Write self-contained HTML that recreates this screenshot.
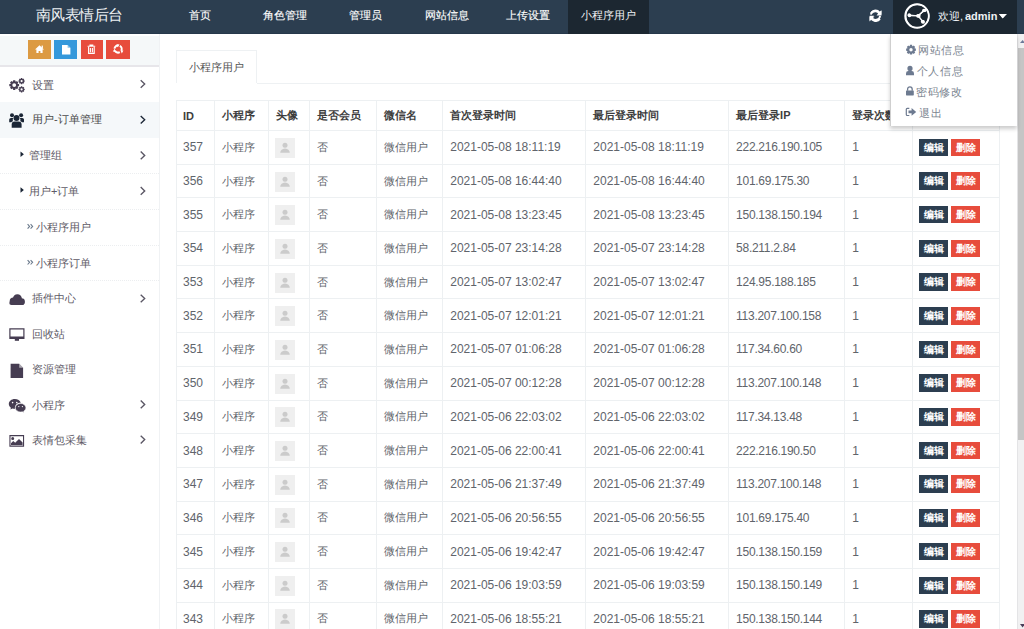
<!DOCTYPE html><html><head><meta charset="utf-8"><style>
*{margin:0;padding:0;box-sizing:border-box}
html,body{width:1024px;height:629px;overflow:hidden;background:#fff;font-family:"Liberation Sans",sans-serif}
.abs{position:absolute}
#hdr{position:absolute;left:0;top:0;width:1024px;height:34px;background:#2c3e50;border-bottom:1px solid #26384b}
.logo{position:absolute;left:36px;top:6px;font-size:15px;letter-spacing:-0.55px;color:#eef2f4;line-height:18px;white-space:nowrap}
.nav{position:absolute;top:0;height:34px;line-height:31px;font-size:11px;color:#f2f4f6;text-align:center;white-space:nowrap}
.nav.b{-webkit-text-stroke:0.12px #fff;color:#fff}
.nav.act{background:#1c2731}
#user{position:absolute;left:893px;top:0;width:124px;height:34px;background:#1c2731}
#side{position:absolute;left:0;top:34px;width:160px;height:595px;background:#fff;border-right:1px solid #f0f2f4}
#tool{position:absolute;left:0;top:2px;width:159px;height:31px;background:#f5f8f9;border-bottom:2px solid #e7e6ea}
.tb{position:absolute;top:4px;height:19px}
.mi{position:absolute;left:0;width:159px;height:36px;font-size:11px;color:#5e5a66;}
.mi .t{position:absolute;top:0;line-height:34px;white-space:nowrap}
.mi .chev{position:absolute;left:139px;top:14px}
.mi .ic{position:absolute;left:9px}
#content{position:absolute;left:160px;top:35px;width:857px;height:594px;background:#fff;overflow:hidden}
#sb{position:absolute;left:1017px;top:34px;width:7px;height:595px;background:#f1f1f2;border-left:1px solid #e4e4e6}
#thumb{position:absolute;left:0;top:14px;width:6px;height:392px;background:#c5c5c5}
.tab{position:absolute;left:16px;top:15px;width:81px;height:33px;border:1px solid #eef1f3;border-bottom:none;background:#fff;font-size:11px;color:#555;line-height:32px;text-align:center}
.tabline{position:absolute;left:97px;top:48px;width:760px;height:1px;background:#eef1f3}
table{position:absolute;left:16px;top:65px;border-collapse:collapse;table-layout:fixed;width:824px}
td,th{border:1px solid #edf0f2;padding:0 0 0 7px;font-size:13px;color:#60646b;text-align:left;white-space:nowrap;overflow:hidden;font-weight:normal;vertical-align:middle}
th:first-child{padding-left:6px}
th{font-weight:bold;color:#3d3d3d;font-size:11px;height:30px}
td{height:33.7px;font-size:12px}
td.cj{font-size:11px}
.av{display:block;margin:1px 0 0 -0.7px}
.btn{display:inline-block;width:29px;height:17.5px;line-height:17.5px;font-size:10px;font-weight:bold;color:#fff;text-align:center;vertical-align:middle}
.be{background:#2c3e50}
.bd{background:#e74c3c;margin-left:3px}
#dd{position:absolute;left:889.5px;top:34px;width:127.5px;height:92px;background:#fff;box-shadow:0 3px 4px rgba(0,0,0,.2);border-left:1px solid #cfcfcf}
.di{position:absolute;font-size:11px;color:#7b8590;white-space:nowrap;line-height:14px;letter-spacing:0.7px}
</style></head><body>
<div id="hdr"><div class="logo">南风表情后台</div>
<div class="nav b" style="left:159px;width:81px">首页</div>
<div class="nav b" style="left:244px;width:81px">角色管理</div>
<div class="nav b" style="left:325px;width:81px">管理员</div>
<div class="nav b" style="left:406px;width:81px">网站信息</div>
<div class="nav b" style="left:487px;width:81px">上传设置</div>
<div class="nav act" style="left:568px;width:81px">小程序用户</div>
<svg class="abs" style="left:869px;top:10px" width="13" height="12" viewBox="0 0 13 12"><path d="M11 4.5A5 5 0 0 0 2.2 3.2" stroke="#fff" stroke-width="2.2" fill="none"/><path d="M12.5 0.5V5.5H7.5z" fill="#fff"/><path d="M2 7.5A5 5 0 0 0 10.8 8.8" stroke="#fff" stroke-width="2.2" fill="none"/><path d="M0.5 11.5V6.5H5.5z" fill="#fff"/></svg>
<div id="user">
<svg class="abs" style="left:11px;top:3px" width="26" height="26" viewBox="0 0 26 26"><circle cx="13" cy="13" r="11.8" stroke="#fff" stroke-width="1.8" fill="none"/><path d="M5.5 12.5L14 12.8L19.8 7.5M14 12.8L18.6 18.4" stroke="#fff" stroke-width="1.3" fill="none"/><circle cx="5.5" cy="12.5" r="1.7" fill="#fff"/><circle cx="14" cy="12.8" r="1.9" fill="#fff"/><circle cx="19.8" cy="7.5" r="1.7" fill="#fff"/><circle cx="18.6" cy="18.4" r="1.7" fill="#fff"/></svg>
<div class="abs" style="left:45px;top:9px;font-size:11px;color:#eef2f4;white-space:nowrap;line-height:14px">欢迎,</div><div class="abs" style="left:72px;top:9px;font-size:11px;font-weight:bold;color:#eef2f4;white-space:nowrap;line-height:14px">admin</div>
<svg class="abs" style="left:106px;top:14px" width="8" height="4" viewBox="0 0 8 4"><path d="M0 0H8L4 4z" fill="#fff"/></svg>
</div></div>
<div id="side"><div id="tool">
<div class="tb" style="left:28px;width:23px;background:#dc9a42"></div>
<div class="tb" style="left:54px;width:23px;background:#3498db"></div>
<div class="tb" style="left:81px;width:22px;background:#e74c3c"></div>
<div class="tb" style="left:106px;width:24px;background:#e74c3c"></div>
</div>
<div class="mi" style="top:33px;"><span class="t" style="left:32px;top:0.9px">设置</span>
</div>
<div class="mi" style="top:67.5px;background:#f5f8fa;color:#4a4a4a;"><span class="t" style="left:32px;top:0.9px">用户-订单管理</span>
</div>
<div class="mi" style="top:103.5px;"><span class="t" style="left:29px;top:0.9px">管理组</span>
</div>
<div class="mi" style="top:139px;"><span class="t" style="left:29px;top:0.9px">用户+订单</span>
</div>
<div class="mi" style="top:174.5px;"><span class="t" style="left:36px;top:1.6px">小程序用户</span>
</div>
<div class="mi" style="top:210.5px;"><span class="t" style="left:36px;top:1.6px">小程序订单</span>
</div>
<div class="mi" style="top:246.5px;"><span class="t" style="left:32px;top:0.9px">插件中心</span>
</div>
<div class="mi" style="top:282px;"><span class="t" style="left:32px;top:0.9px">回收站</span>
</div>
<div class="mi" style="top:317.5px;"><span class="t" style="left:32px;top:0.9px">资源管理</span>
</div>
<div class="mi" style="top:353px;"><span class="t" style="left:32px;top:0.9px">小程序</span>
</div>
<div class="mi" style="top:388px;"><span class="t" style="left:32px;top:0.9px">表情包采集</span>
</div>
<div class="abs" style="left:0;top:138.5px;width:159px;height:0;border-top:1px dotted #eceef0"></div>
<div class="abs" style="left:0;top:174.5px;width:159px;height:0;border-top:1px dotted #eceef0"></div>
<div class="abs" style="left:0;top:210.5px;width:159px;height:0;border-top:1px dotted #eceef0"></div>
<div class="abs" style="left:0;top:246px;width:159px;height:0;border-top:1px dotted #eceef0"></div>
</div>
<div id="content">
<div class="tab">小程序用户</div><div class="tabline"></div>
<table><colgroup><col style="width:38.25px"><col style="width:53.9px"><col style="width:41.0px"><col style="width:66.4px"><col style="width:66.7px"><col style="width:143.1px"><col style="width:142.8px"><col style="width:116.2px"><col style="width:67.8px"><col style="width:87.0px"></colgroup>
<tr><th>ID</th><th>小程序</th><th>头像</th><th>是否会员</th><th>微信名</th><th>首次登录时间</th><th>最后登录时间</th><th>最后登录IP</th><th>登录次数</th><th></th></tr>
<tr><td style="padding-left:6px">357</td><td class="cj">小程序</td><td><svg class="av" width="20" height="20"><rect x="0" y="0" width="20" height="20" fill="#efefef"/><path d="M7.50 7.30a2.5 2.5 0 1 0 5.00 0a2.5 2.5 0 1 0 -5.00 0Z" fill="#cbcbcb"/><path d="M5.2 14.8Q5.6 10.8 10 10.4Q14.4 10.8 14.8 14.8z" fill="#cbcbcb"/></svg></td><td class="cj">否</td><td class="cj">微信用户</td><td>2021-05-08 18:11:19</td><td>2021-05-08 18:11:19</td><td style="letter-spacing:-0.28px">222.216.190.105</td><td>1</td><td style="padding-left:6px"><span class="btn be">编辑</span><span class="btn bd">删除</span></td></tr>
<tr><td style="padding-left:6px">356</td><td class="cj">小程序</td><td><svg class="av" width="20" height="20"><rect x="0" y="0" width="20" height="20" fill="#efefef"/><path d="M7.50 7.30a2.5 2.5 0 1 0 5.00 0a2.5 2.5 0 1 0 -5.00 0Z" fill="#cbcbcb"/><path d="M5.2 14.8Q5.6 10.8 10 10.4Q14.4 10.8 14.8 14.8z" fill="#cbcbcb"/></svg></td><td class="cj">否</td><td class="cj">微信用户</td><td>2021-05-08 16:44:40</td><td>2021-05-08 16:44:40</td><td style="letter-spacing:-0.28px">101.69.175.30</td><td>1</td><td style="padding-left:6px"><span class="btn be">编辑</span><span class="btn bd">删除</span></td></tr>
<tr><td style="padding-left:6px">355</td><td class="cj">小程序</td><td><svg class="av" width="20" height="20"><rect x="0" y="0" width="20" height="20" fill="#efefef"/><path d="M7.50 7.30a2.5 2.5 0 1 0 5.00 0a2.5 2.5 0 1 0 -5.00 0Z" fill="#cbcbcb"/><path d="M5.2 14.8Q5.6 10.8 10 10.4Q14.4 10.8 14.8 14.8z" fill="#cbcbcb"/></svg></td><td class="cj">否</td><td class="cj">微信用户</td><td>2021-05-08 13:23:45</td><td>2021-05-08 13:23:45</td><td style="letter-spacing:-0.28px">150.138.150.194</td><td>1</td><td style="padding-left:6px"><span class="btn be">编辑</span><span class="btn bd">删除</span></td></tr>
<tr><td style="padding-left:6px">354</td><td class="cj">小程序</td><td><svg class="av" width="20" height="20"><rect x="0" y="0" width="20" height="20" fill="#efefef"/><path d="M7.50 7.30a2.5 2.5 0 1 0 5.00 0a2.5 2.5 0 1 0 -5.00 0Z" fill="#cbcbcb"/><path d="M5.2 14.8Q5.6 10.8 10 10.4Q14.4 10.8 14.8 14.8z" fill="#cbcbcb"/></svg></td><td class="cj">否</td><td class="cj">微信用户</td><td>2021-05-07 23:14:28</td><td>2021-05-07 23:14:28</td><td style="letter-spacing:-0.28px">58.211.2.84</td><td>1</td><td style="padding-left:6px"><span class="btn be">编辑</span><span class="btn bd">删除</span></td></tr>
<tr><td style="padding-left:6px">353</td><td class="cj">小程序</td><td><svg class="av" width="20" height="20"><rect x="0" y="0" width="20" height="20" fill="#efefef"/><path d="M7.50 7.30a2.5 2.5 0 1 0 5.00 0a2.5 2.5 0 1 0 -5.00 0Z" fill="#cbcbcb"/><path d="M5.2 14.8Q5.6 10.8 10 10.4Q14.4 10.8 14.8 14.8z" fill="#cbcbcb"/></svg></td><td class="cj">否</td><td class="cj">微信用户</td><td>2021-05-07 13:02:47</td><td>2021-05-07 13:02:47</td><td style="letter-spacing:-0.28px">124.95.188.185</td><td>1</td><td style="padding-left:6px"><span class="btn be">编辑</span><span class="btn bd">删除</span></td></tr>
<tr><td style="padding-left:6px">352</td><td class="cj">小程序</td><td><svg class="av" width="20" height="20"><rect x="0" y="0" width="20" height="20" fill="#efefef"/><path d="M7.50 7.30a2.5 2.5 0 1 0 5.00 0a2.5 2.5 0 1 0 -5.00 0Z" fill="#cbcbcb"/><path d="M5.2 14.8Q5.6 10.8 10 10.4Q14.4 10.8 14.8 14.8z" fill="#cbcbcb"/></svg></td><td class="cj">否</td><td class="cj">微信用户</td><td>2021-05-07 12:01:21</td><td>2021-05-07 12:01:21</td><td style="letter-spacing:-0.28px">113.207.100.158</td><td>1</td><td style="padding-left:6px"><span class="btn be">编辑</span><span class="btn bd">删除</span></td></tr>
<tr><td style="padding-left:6px">351</td><td class="cj">小程序</td><td><svg class="av" width="20" height="20"><rect x="0" y="0" width="20" height="20" fill="#efefef"/><path d="M7.50 7.30a2.5 2.5 0 1 0 5.00 0a2.5 2.5 0 1 0 -5.00 0Z" fill="#cbcbcb"/><path d="M5.2 14.8Q5.6 10.8 10 10.4Q14.4 10.8 14.8 14.8z" fill="#cbcbcb"/></svg></td><td class="cj">否</td><td class="cj">微信用户</td><td>2021-05-07 01:06:28</td><td>2021-05-07 01:06:28</td><td style="letter-spacing:-0.28px">117.34.60.60</td><td>1</td><td style="padding-left:6px"><span class="btn be">编辑</span><span class="btn bd">删除</span></td></tr>
<tr><td style="padding-left:6px">350</td><td class="cj">小程序</td><td><svg class="av" width="20" height="20"><rect x="0" y="0" width="20" height="20" fill="#efefef"/><path d="M7.50 7.30a2.5 2.5 0 1 0 5.00 0a2.5 2.5 0 1 0 -5.00 0Z" fill="#cbcbcb"/><path d="M5.2 14.8Q5.6 10.8 10 10.4Q14.4 10.8 14.8 14.8z" fill="#cbcbcb"/></svg></td><td class="cj">否</td><td class="cj">微信用户</td><td>2021-05-07 00:12:28</td><td>2021-05-07 00:12:28</td><td style="letter-spacing:-0.28px">113.207.100.148</td><td>1</td><td style="padding-left:6px"><span class="btn be">编辑</span><span class="btn bd">删除</span></td></tr>
<tr><td style="padding-left:6px">349</td><td class="cj">小程序</td><td><svg class="av" width="20" height="20"><rect x="0" y="0" width="20" height="20" fill="#efefef"/><path d="M7.50 7.30a2.5 2.5 0 1 0 5.00 0a2.5 2.5 0 1 0 -5.00 0Z" fill="#cbcbcb"/><path d="M5.2 14.8Q5.6 10.8 10 10.4Q14.4 10.8 14.8 14.8z" fill="#cbcbcb"/></svg></td><td class="cj">否</td><td class="cj">微信用户</td><td>2021-05-06 22:03:02</td><td>2021-05-06 22:03:02</td><td style="letter-spacing:-0.28px">117.34.13.48</td><td>1</td><td style="padding-left:6px"><span class="btn be">编辑</span><span class="btn bd">删除</span></td></tr>
<tr><td style="padding-left:6px">348</td><td class="cj">小程序</td><td><svg class="av" width="20" height="20"><rect x="0" y="0" width="20" height="20" fill="#efefef"/><path d="M7.50 7.30a2.5 2.5 0 1 0 5.00 0a2.5 2.5 0 1 0 -5.00 0Z" fill="#cbcbcb"/><path d="M5.2 14.8Q5.6 10.8 10 10.4Q14.4 10.8 14.8 14.8z" fill="#cbcbcb"/></svg></td><td class="cj">否</td><td class="cj">微信用户</td><td>2021-05-06 22:00:41</td><td>2021-05-06 22:00:41</td><td style="letter-spacing:-0.28px">222.216.190.50</td><td>1</td><td style="padding-left:6px"><span class="btn be">编辑</span><span class="btn bd">删除</span></td></tr>
<tr><td style="padding-left:6px">347</td><td class="cj">小程序</td><td><svg class="av" width="20" height="20"><rect x="0" y="0" width="20" height="20" fill="#efefef"/><path d="M7.50 7.30a2.5 2.5 0 1 0 5.00 0a2.5 2.5 0 1 0 -5.00 0Z" fill="#cbcbcb"/><path d="M5.2 14.8Q5.6 10.8 10 10.4Q14.4 10.8 14.8 14.8z" fill="#cbcbcb"/></svg></td><td class="cj">否</td><td class="cj">微信用户</td><td>2021-05-06 21:37:49</td><td>2021-05-06 21:37:49</td><td style="letter-spacing:-0.28px">113.207.100.148</td><td>1</td><td style="padding-left:6px"><span class="btn be">编辑</span><span class="btn bd">删除</span></td></tr>
<tr><td style="padding-left:6px">346</td><td class="cj">小程序</td><td><svg class="av" width="20" height="20"><rect x="0" y="0" width="20" height="20" fill="#efefef"/><path d="M7.50 7.30a2.5 2.5 0 1 0 5.00 0a2.5 2.5 0 1 0 -5.00 0Z" fill="#cbcbcb"/><path d="M5.2 14.8Q5.6 10.8 10 10.4Q14.4 10.8 14.8 14.8z" fill="#cbcbcb"/></svg></td><td class="cj">否</td><td class="cj">微信用户</td><td>2021-05-06 20:56:55</td><td>2021-05-06 20:56:55</td><td style="letter-spacing:-0.28px">101.69.175.40</td><td>1</td><td style="padding-left:6px"><span class="btn be">编辑</span><span class="btn bd">删除</span></td></tr>
<tr><td style="padding-left:6px">345</td><td class="cj">小程序</td><td><svg class="av" width="20" height="20"><rect x="0" y="0" width="20" height="20" fill="#efefef"/><path d="M7.50 7.30a2.5 2.5 0 1 0 5.00 0a2.5 2.5 0 1 0 -5.00 0Z" fill="#cbcbcb"/><path d="M5.2 14.8Q5.6 10.8 10 10.4Q14.4 10.8 14.8 14.8z" fill="#cbcbcb"/></svg></td><td class="cj">否</td><td class="cj">微信用户</td><td>2021-05-06 19:42:47</td><td>2021-05-06 19:42:47</td><td style="letter-spacing:-0.28px">150.138.150.159</td><td>1</td><td style="padding-left:6px"><span class="btn be">编辑</span><span class="btn bd">删除</span></td></tr>
<tr><td style="padding-left:6px">344</td><td class="cj">小程序</td><td><svg class="av" width="20" height="20"><rect x="0" y="0" width="20" height="20" fill="#efefef"/><path d="M7.50 7.30a2.5 2.5 0 1 0 5.00 0a2.5 2.5 0 1 0 -5.00 0Z" fill="#cbcbcb"/><path d="M5.2 14.8Q5.6 10.8 10 10.4Q14.4 10.8 14.8 14.8z" fill="#cbcbcb"/></svg></td><td class="cj">否</td><td class="cj">微信用户</td><td>2021-05-06 19:03:59</td><td>2021-05-06 19:03:59</td><td style="letter-spacing:-0.28px">150.138.150.149</td><td>1</td><td style="padding-left:6px"><span class="btn be">编辑</span><span class="btn bd">删除</span></td></tr>
<tr><td style="padding-left:6px">343</td><td class="cj">小程序</td><td><svg class="av" width="20" height="20"><rect x="0" y="0" width="20" height="20" fill="#efefef"/><path d="M7.50 7.30a2.5 2.5 0 1 0 5.00 0a2.5 2.5 0 1 0 -5.00 0Z" fill="#cbcbcb"/><path d="M5.2 14.8Q5.6 10.8 10 10.4Q14.4 10.8 14.8 14.8z" fill="#cbcbcb"/></svg></td><td class="cj">否</td><td class="cj">微信用户</td><td>2021-05-06 18:55:21</td><td>2021-05-06 18:55:21</td><td style="letter-spacing:-0.28px">150.138.150.144</td><td>1</td><td style="padding-left:6px"><span class="btn be">编辑</span><span class="btn bd">删除</span></td></tr>
</table></div>
<div id="sb"><div id="thumb"></div></div>
<div id="dd">
<div class="di" style="left:27.5px;top:9px">网站信息</div>
<div class="di" style="left:26px;top:30px">个人信息</div>
<div class="di" style="left:25.5px;top:50.5px">密码修改</div>
<div class="di" style="left:28.5px;top:71.5px">退出</div>
</div>
<svg style="position:absolute;left:0;top:0;pointer-events:none" width="1024" height="629"><path d="M39.5 45.3L35 49.6H36.4V53.1H38.6V50.9H40.4V53.1H42.6V49.6H44z" fill="#fff"/><rect x="41.6" y="45.6" width="1.3" height="2.4" fill="#fff"/>
<path d="M62 45H67.6L70.4 47.8V54.4H62z" fill="#fff"/><path d="M67.6 45V47.8H70.4z" fill="#3498db" opacity=".6"/>
<path d="M87.6 46.3H95.2M90 46.3V45.1H92.8V46.3M88.6 47V53.4H94.2V47M90.4 48V52.2M92.4 48V52.2" stroke="#fff" stroke-width="1.1" fill="none"/>
<circle cx="118.1" cy="49" r="3.6" stroke="#fff" stroke-width="2" fill="none" stroke-dasharray="5.5 2" transform="rotate(-60 118.1 49)"/><path d="M116.4 44.2L119.6 44.6L117.6 47.2z M123.4 50.6L121.8 53.4L120.6 50.4z M112.8 51.4L114.6 48.8L116 51.8z" fill="#fff"/>
<path fill-rule="evenodd" d="M17.93 83.95 L19.08 84.01 L19.08 86.19 L17.93 86.25 L17.65 86.92 L18.42 87.78 L16.88 89.32 L16.02 88.55 L15.35 88.83 L15.29 89.98 L13.11 89.98 L13.05 88.83 L12.38 88.55 L11.52 89.32 L9.98 87.78 L10.75 86.92 L10.47 86.25 L9.32 86.19 L9.32 84.01 L10.47 83.95 L10.75 83.28 L9.98 82.42 L11.52 80.88 L12.38 81.65 L13.05 81.37 L13.11 80.22 L15.29 80.22 L15.35 81.37 L16.02 81.65 L16.88 80.88 L18.42 82.42 L17.65 83.28ZM12.30 85.10a1.9 1.9 0 1 0 3.80 0a1.9 1.9 0 1 0 -3.80 0ZM23.99 80.36 L24.72 80.40 L24.72 81.80 L23.99 81.84 L23.81 82.27 L24.30 82.81 L23.31 83.80 L22.77 83.31 L22.34 83.49 L22.30 84.22 L20.90 84.22 L20.86 83.49 L20.43 83.31 L19.89 83.80 L18.90 82.81 L19.39 82.27 L19.21 81.84 L18.48 81.80 L18.48 80.40 L19.21 80.36 L19.39 79.93 L18.90 79.39 L19.89 78.40 L20.43 78.89 L20.86 78.71 L20.90 77.98 L22.30 77.98 L22.34 78.71 L22.77 78.89 L23.31 78.40 L24.30 79.39 L23.81 79.93ZM20.50 81.10a1.1 1.1 0 1 0 2.20 0a1.1 1.1 0 1 0 -2.20 0ZM23.99 88.66 L24.72 88.70 L24.72 90.10 L23.99 90.14 L23.81 90.57 L24.30 91.11 L23.31 92.10 L22.77 91.61 L22.34 91.79 L22.30 92.52 L20.90 92.52 L20.86 91.79 L20.43 91.61 L19.89 92.10 L18.90 91.11 L19.39 90.57 L19.21 90.14 L18.48 90.10 L18.48 88.70 L19.21 88.66 L19.39 88.23 L18.90 87.69 L19.89 86.70 L20.43 87.19 L20.86 87.01 L20.90 86.28 L22.30 86.28 L22.34 87.01 L22.77 87.19 L23.31 86.70 L24.30 87.69 L23.81 88.23ZM20.50 89.40a1.1 1.1 0 1 0 2.20 0a1.1 1.1 0 1 0 -2.20 0Z" fill="#463d52"/>
<g fill="#1b2636"><path d="M13.50 118.00a3.0 3.0 0 1 0 6.00 0a3.0 3.0 0 1 0 -6.00 0Z"/><path d="M11.7 127.7V124.6Q11.7 121.6 14.6 121.6H18.4Q21.6 121.6 21.6 124.6V127.7z"/><path d="M10.00 115.30a2.0 2.0 0 1 0 4.00 0a2.0 2.0 0 1 0 -4.00 0Z"/><path d="M19.10 115.30a2.0 2.0 0 1 0 4.00 0a2.0 2.0 0 1 0 -4.00 0Z"/><path d="M9.2 122.3V119.6Q9.2 117.9 11 117.9H13.3Q12.4 119.2 12.9 121.2Q11.6 121.6 11.2 122.3z"/><path d="M24 122.3V119.6Q24 117.9 22.2 117.9H19.9Q20.8 119.2 20.3 121.2Q21.6 121.6 22 122.3z"/></g>
<path d="M20.5 151.60000000000002V157.0L23.9 154.3z" fill="#1b2636"/>
<path d="M20.5 187.3V192.7L23.9 190.0z" fill="#1b2636"/>
<path d="M27.6 224.20000000000002L29.6 226.4L27.6 228.6M30.6 224.20000000000002L32.6 226.4L30.6 228.6" stroke="#6b7a8c" stroke-width="1.1" fill="none"/>
<path d="M27.6 260.1L29.6 262.3L27.6 264.5M30.6 260.1L32.6 262.3L30.6 264.5" stroke="#6b7a8c" stroke-width="1.1" fill="none"/>
<g fill="#463d52"><path d="M9.70 301.00a3.6 3.6 0 1 0 7.20 0a3.6 3.6 0 1 0 -7.20 0Z"/><path d="M12.90 298.70a4.5 4.5 0 1 0 9.00 0a4.5 4.5 0 1 0 -9.00 0Z"/><path d="M18.10 301.60a3.4 3.4 0 1 0 6.80 0a3.4 3.4 0 1 0 -6.80 0Z"/><path d="M11.40 300.80H22.40Q24.50 300.80 24.50 302.90V303.00Q24.50 305.10 22.40 305.10H11.40Q9.30 305.10 9.30 303.00V302.90Q9.30 300.80 11.40 300.80Z"/></g>
<path fill-rule="evenodd" d="M9.3 328.2H24.5V339H9.3z M10.5 329.4V336.6H23.3V329.4z" fill="#463d52"/><rect x="14.8" y="339" width="4.2" height="1.8" fill="#463d52"/>
<path d="M10.6 363.8H19.2L23.1 367.7V377.9H10.6z" fill="#463d52"/><path d="M19.2 363.8V367.7H23.1z" fill="#fff" opacity=".55"/>
<path d="M14.8 399.1C11.4 399.1 8.8 401.3 8.8 404.0C8.8 405.5 9.6 406.8 10.9 407.7L10.4 409.4L12.4 408.4C13.1 408.7 13.9 408.8 14.8 408.8C15 408.8 15.3 408.8 15.5 408.8C15.3 408.3 15.2 407.8 15.2 407.3C15.2 404.8 17.5 402.8 20.5 402.8C20.6 402.8 20.7 402.8 20.8 402.8C20.1 400.7 17.7 399.1 14.8 399.1z" fill="#463d52"/>
<path d="M20.6 403.4C17.7 403.4 15.3 405.3 15.3 407.7C15.3 410.1 17.7 412 20.6 412C21.2 412 21.8 411.9 22.3 411.8L24.1 412.7L23.7 411.2C25 410.3 25.9 409.1 25.9 407.7C25.9 405.3 23.5 403.4 20.6 403.4z" fill="#463d52" stroke="#fff" stroke-width="0.6"/>
<g fill="#fff"><circle cx="12.6" cy="402.6" r="0.8"/><circle cx="16.8" cy="402.6" r="0.8"/><circle cx="18.8" cy="406.6" r="0.65"/><circle cx="22.4" cy="406.6" r="0.65"/></g>
<path fill-rule="evenodd" d="M9.4 435.1H24.1V446.7H9.4z M10.5 436.2V445.6H23V436.2z" fill="#463d52"/><path d="M11.20 438.40a1.5 1.5 0 1 0 3.00 0a1.5 1.5 0 1 0 -3.00 0Z" fill="#463d52"/><path d="M11 445V443.2L13.2 441L15.2 442.8L19 438.9L22.6 442.4V445z" fill="#463d52"/>
<path d="M140.7 80.2L144.7 84L140.7 87.8" stroke="#5a5664" stroke-width="1.35" fill="none"/>
<path d="M140.7 115.9L144.7 119.7L140.7 123.5" stroke="#1b2636" stroke-width="1.35" fill="none"/>
<path d="M140.7 151.6L144.7 155.4L140.7 159.20000000000002" stroke="#5a5664" stroke-width="1.35" fill="none"/>
<path d="M140.7 187.1L144.7 190.9L140.7 194.70000000000002" stroke="#5a5664" stroke-width="1.35" fill="none"/>
<path d="M140.7 294.7L144.7 298.5L140.7 302.3" stroke="#5a5664" stroke-width="1.35" fill="none"/>
<path d="M140.7 400.59999999999997L144.7 404.4L140.7 408.2" stroke="#5a5664" stroke-width="1.35" fill="none"/>
<path d="M140.7 435.8L144.7 439.6L140.7 443.40000000000003" stroke="#5a5664" stroke-width="1.35" fill="none"/>
<g fill="none" stroke="#fff" stroke-width="1.8"><path d="M870.9 14.7A4.6 4.6 0 0 1 879.27 12.56"/><path d="M880.1 15.8A4.6 4.6 0 0 1 871.73 17.84"/></g><path d="M881.3 10.2V14.6H876.9z" fill="#fff"/><path d="M869.7 20.4V15.8H874.1z" fill="#fff"/>
<circle cx="917.3" cy="16" r="11.5" stroke="#fff" stroke-width="1.35" fill="none"/><path d="M909.2 15L918.8 15.8L924.9 10.4M918.8 15.8L923.1 21.9" stroke="#fff" stroke-width="0.8" fill="none"/><g fill="#fff"><circle cx="909.2" cy="15" r="1.75"/><circle cx="918.8" cy="15.8" r="1.85"/><circle cx="924.9" cy="10.4" r="1.7"/><circle cx="923.1" cy="21.9" r="1.85"/></g>
<path d="M999 14H1006.2L1002.6 18.4z" fill="#fff"/>
<path fill-rule="evenodd" d="M914.82 48.52 L915.88 48.61 L915.88 50.79 L914.82 50.88 L914.54 51.57 L915.22 52.38 L913.68 53.92 L912.87 53.24 L912.18 53.52 L912.09 54.58 L909.91 54.58 L909.82 53.52 L909.13 53.24 L908.32 53.92 L906.78 52.38 L907.46 51.57 L907.18 50.88 L906.12 50.79 L906.12 48.61 L907.18 48.52 L907.46 47.83 L906.78 47.02 L908.32 45.48 L909.13 46.16 L909.82 45.88 L909.91 44.82 L912.09 44.82 L912.18 45.88 L912.87 46.16 L913.68 45.48 L915.22 47.02 L914.54 47.83ZM909.30 49.70a1.7 1.7 0 1 0 3.40 0a1.7 1.7 0 1 0 -3.40 0Z" fill="#6d7a90"/>
<g fill="#6d7a90"><path d="M907.40 68.40a2.6 2.6 0 1 0 5.20 0a2.6 2.6 0 1 0 -5.20 0Z"/><path d="M906 75.3V73.4Q906 71 908.4 71H911.6Q914 71 914 73.4V75.3z"/></g>
<path d="M907.6 90.8V89.2A2.3 2.3 0 0 1 912.2 89.2V90.8" stroke="#6d7a90" stroke-width="1.3" fill="none"/><rect x="906" y="90.4" width="7.8" height="5" rx="0.6" fill="#6d7a90"/>
<path d="M909.3 108.3H907.2Q906.3 108.3 906.3 109.2V114.6Q906.3 115.5 907.2 115.5H909.3" stroke="#6d7a90" stroke-width="1.2" fill="none"/><path d="M908.5 110.6H911.6V108L916.2 111.9L911.6 115.8V113.2H908.5z" fill="#6d7a90"/>
<path d="M1020 43L1022.6 40L1025.2 43z" fill="#6b7898"/><path d="M1020 624L1022.6 627.5L1025.2 624z" fill="#4a3f5a"/></svg>
</body></html>
